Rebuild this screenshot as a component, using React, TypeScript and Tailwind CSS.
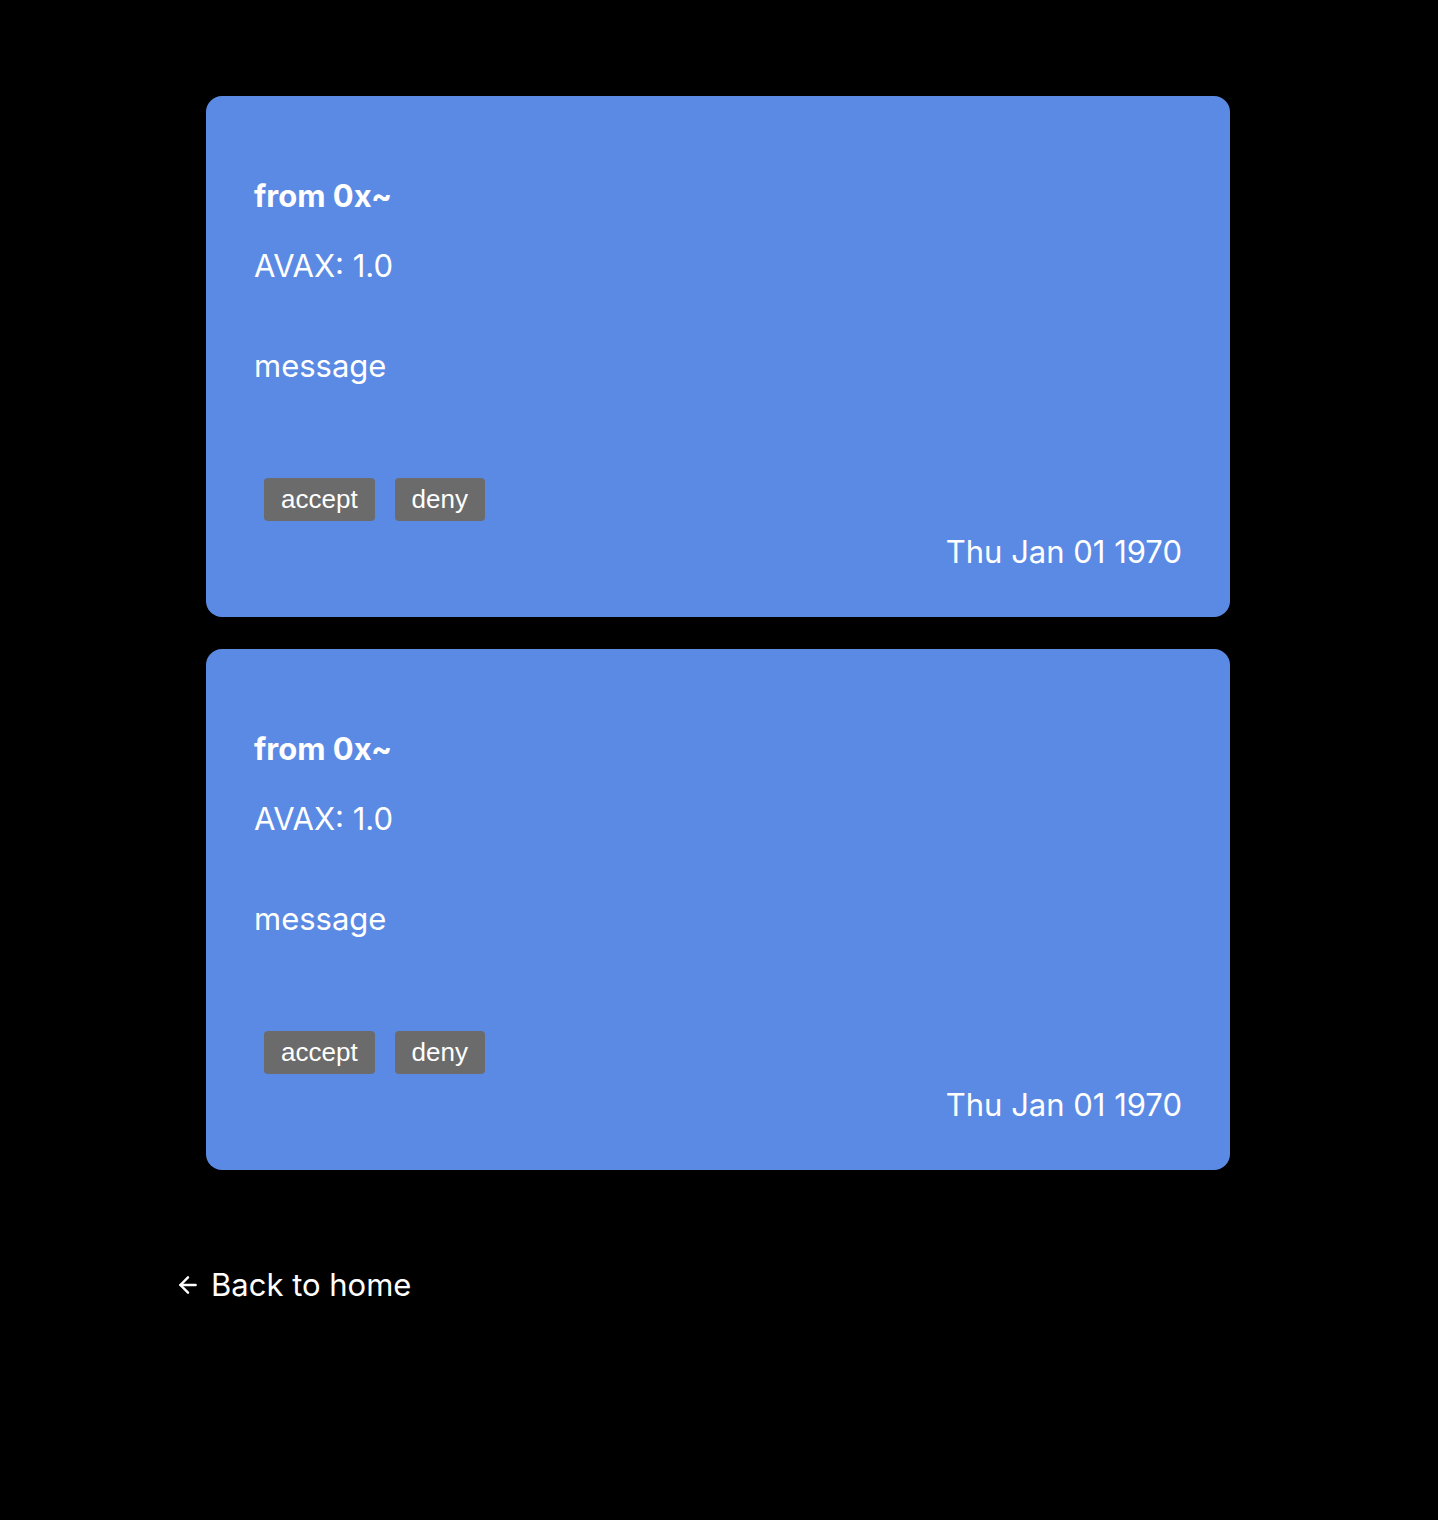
import { ArrowLeft } from "lucide-react";

const requests = [
  { id: 1, from: "0x~", amount: "1.0", message: "message", date: "Thu Jan 01 1970" },
  { id: 2, from: "0x~", amount: "1.0", message: "message", date: "Thu Jan 01 1970" },
];

function RequestCard({ from, amount, message, date }: (typeof requests)[number]) {
  return (
    <div className="flex h-[521px] flex-col rounded-2xl bg-[#5b8ae5] px-12 pt-[82px] text-white">
      <h3 className="text-[31px] font-bold leading-[36px]">from {from}</h3>
      <p className="mt-[34px] text-[31px] leading-[36px]">AVAX: {amount}</p>
      <p className="mt-[64px] text-[31px] leading-[36px]">{message}</p>
      <div className="mt-[94px] flex gap-5 pl-[10px] font-['Liberation_Sans',Arial,sans-serif]">
        <button className="h-[43px] rounded bg-[#6b6b6b] px-[17px] text-[26px] text-white">accept</button>
        <button className="h-[43px] rounded bg-[#6b6b6b] px-[17px] text-[26px] text-white">deny</button>
      </div>
      <p className="mt-[11px] text-right text-[31px] leading-[40px]">{date}</p>
    </div>
  );
}

export default function App() {
  return (
    <div className="min-h-[1520px] bg-black font-['Inter','Noto_Sans',sans-serif] text-white">
      <div className="ml-[206px] flex w-[1024px] flex-col gap-8 pt-[96px]">
        {requests.map((r) => (
          <RequestCard key={r.id} {...r} />
        ))}
      </div>
      <a href="#" className="ml-[175px] mt-[97px] flex w-fit items-center gap-[10px] text-[31px] leading-[36px]">
        <ArrowLeft className="h-[26px] w-[26px]" strokeWidth={2.25} />
        Back to home
      </a>
    </div>
  );
}
